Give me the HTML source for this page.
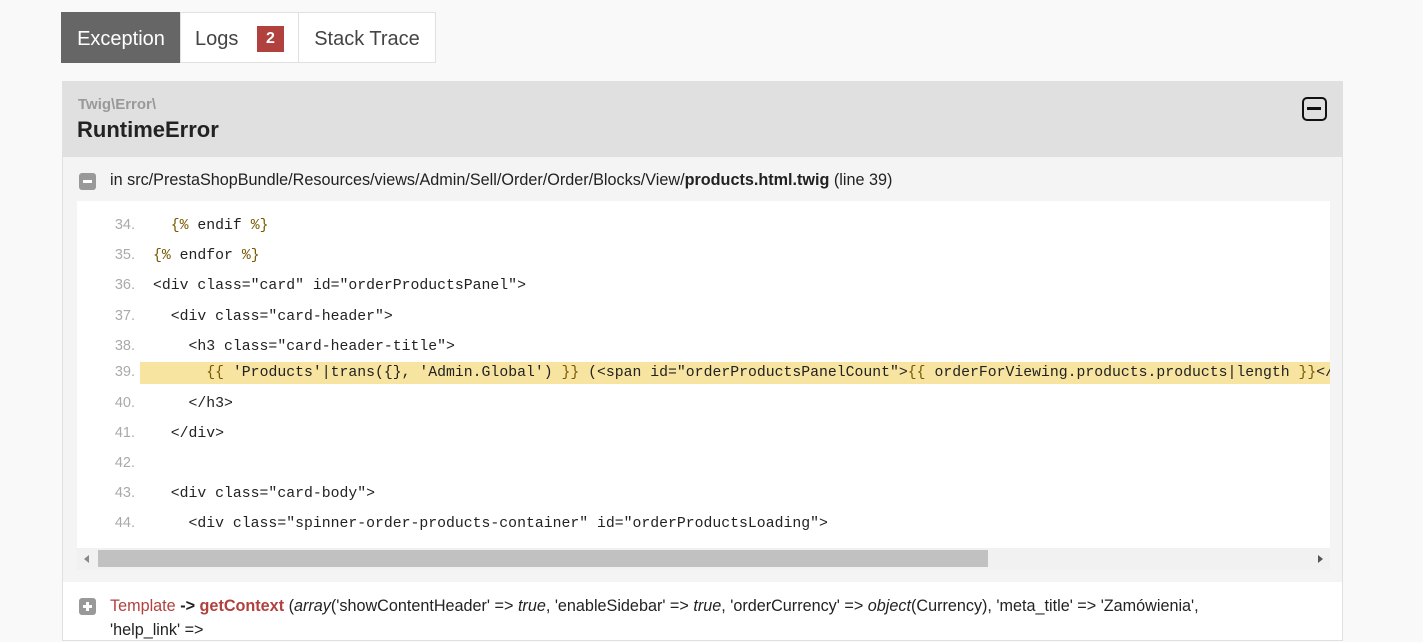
<!DOCTYPE html>
<html><head><meta charset="utf-8"><style>
*{box-sizing:border-box;margin:0;padding:0}
body{width:1423px;height:631px;overflow:hidden;background:#f9f9f9;font-family:"Liberation Sans",Arial,sans-serif;color:#222;position:relative}
.tab{position:absolute;top:12px;height:51px;font-size:20px;line-height:53px;text-align:center;border:1px solid #e0e0e0;background:#fff;color:#444}
.panel{position:absolute;left:62px;top:81px;width:1281px;height:560px;border:1px solid #e0e0e0;border-top:0;background:#fff}
.hdr{position:absolute;left:0;top:0;width:1279px;height:76px;background:#e0e0e0}
.trace{position:absolute;left:0;top:76px;width:1279px;height:425px;background:#f4f4f4}
.code{position:absolute;left:14px;top:44px;width:1253px;height:347px;background:#fff;overflow:hidden}
.ln{position:absolute;left:0;width:58px;text-align:right;color:#aaa;font-size:14.5px}
.cl{position:absolute;left:76px;font-family:"Liberation Mono",monospace;font-size:14.8px;white-space:pre;color:#222}
.t{color:#7a5a00}
.sb{position:absolute;left:14px;top:391px;width:1253px;height:22px;background:#f1f1f1}
</style></head><body>
<div class="tab" style="left:61px;width:120px;background:#666;color:#fff;border-color:#666">Exception</div>
<div class="tab" style="left:180px;width:119px">Logs <span style="display:inline-block;background:#b0413e;color:#fff;font-weight:bold;font-size:16px;line-height:26px;width:27px;margin-left:13px;vertical-align:2px">2</span></div>
<div class="tab" style="left:298px;width:138px">Stack Trace</div>
<div class="panel">
 <div class="hdr">
  <div style="position:absolute;left:15px;top:15px;font-size:15px;font-weight:bold;color:#999">Twig\Error\</div>
  <div style="position:absolute;left:14px;top:36px;font-size:22px;font-weight:bold;color:#222">RuntimeError</div>
  <div style="position:absolute;left:1239px;top:16px;width:25px;height:24px;border:2.5px solid #111;border-radius:5px"><div style="position:absolute;left:3px;top:8px;width:14px;height:3px;background:#111"></div></div>
 </div>
 <div class="trace">
  <div style="position:absolute;left:16px;top:16px;width:17px;height:17px;background:#999;border-radius:3px"><div style="position:absolute;left:4px;top:7px;width:9px;height:3px;background:#fff"></div></div>
  <div style="position:absolute;left:47px;top:14px;font-size:16.2px;color:#222">in src/PrestaShopBundle/Resources/views/Admin/Sell/Order/Order/Blocks/View/<b>products.html.twig</b> (line 39)</div>
  <div class="code">
   <div style="position:absolute;left:63px;top:161px;width:1200px;height:22px;background:#f7e4a0"></div>
   <div class="ln" style="top:16px">34.</div><div class="cl" style="top:17px">  <span class="t">{%</span> endif <span class="t">%}</span></div>
   <div class="ln" style="top:46px">35.</div><div class="cl" style="top:47px"><span class="t">{%</span> endfor <span class="t">%}</span></div>
   <div class="ln" style="top:76px">36.</div><div class="cl" style="top:77px">&lt;div class="card" id="orderProductsPanel"&gt;</div>
   <div class="ln" style="top:107px">37.</div><div class="cl" style="top:108px">  &lt;div class="card-header"&gt;</div>
   <div class="ln" style="top:137px">38.</div><div class="cl" style="top:138px">    &lt;h3 class="card-header-title"&gt;</div>
   <div class="ln" style="top:163px">39.</div><div class="cl" style="top:164px">      <span class="t">{{</span> 'Products'|trans({}, 'Admin.Global') <span class="t">}}</span> (&lt;span id="orderProductsPanelCount"&gt;<span class="t">{{</span> orderForViewing.products.products|length <span class="t">}}</span>&lt;/span&gt;)</div>
   <div class="ln" style="top:194px">40.</div><div class="cl" style="top:195px">    &lt;/h3&gt;</div>
   <div class="ln" style="top:224px">41.</div><div class="cl" style="top:225px">  &lt;/div&gt;</div>
   <div class="ln" style="top:254px">42.</div>
   <div class="ln" style="top:284px">43.</div><div class="cl" style="top:285px">  &lt;div class="card-body"&gt;</div>
   <div class="ln" style="top:314px">44.</div><div class="cl" style="top:315px">    &lt;div class="spinner-order-products-container" id="orderProductsLoading"&gt;</div>
  </div>
  <div class="sb">
   <div style="position:absolute;left:7px;top:7px;border:4px solid transparent;border-right:5px solid #888;border-left:0"></div>
   <div style="position:absolute;left:21px;top:2px;width:890px;height:17px;background:#c1c1c1"></div>
   <div style="position:absolute;right:7px;top:7px;border:4px solid transparent;border-left:5px solid #555;border-right:0"></div>
  </div>
 </div>
 <div style="position:absolute;left:16px;top:517px;width:17px;height:17px;background:#999;border-radius:3px"><div style="position:absolute;left:4px;top:7px;width:9px;height:3px;background:#fff"></div><div style="position:absolute;left:7px;top:4px;width:3px;height:9px;background:#fff"></div></div>
 <div style="position:absolute;left:47px;top:513px;width:1150px;font-size:16.2px;line-height:24px;color:#222"><span style="color:#b0413e">Template</span> <b>-&gt;</b> <b style="color:#b0413e">getContext</b> (<i>array</i>('showContentHeader' =&gt; <i>true</i>, 'enableSidebar' =&gt; <i>true</i>, 'orderCurrency' =&gt; <i>object</i>(Currency), 'meta_title' =&gt; 'Zamówienia', 'help_link' =&gt;</div>
</div>
</body></html>
